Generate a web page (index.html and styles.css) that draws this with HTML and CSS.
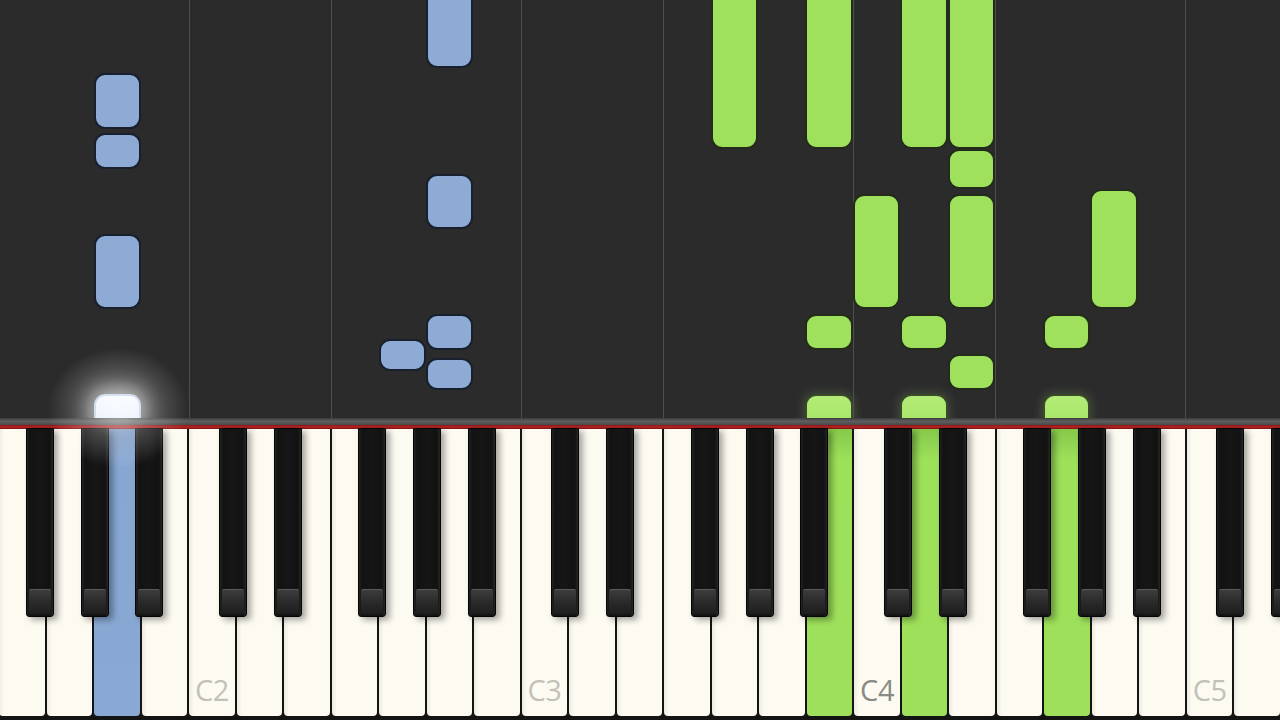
FILE: index.html
```html
<!DOCTYPE html>
<html>
<head>
<meta charset="utf-8">
<link rel="stylesheet" href="styles.css">
</head>
<body>
<div class="stage">
  <div class="lane"></div>
  <div class="lane"></div>
  <div class="lane">
    <div class="note blue" style="top:73px;height:56px"></div>
    <div class="note blue" style="top:133px;height:36px"></div>
    <div class="note blue" style="top:234px;height:75px"></div>
    <div class="note blue playing" style="top:394px;height:40px"></div>
  </div>
  <div class="lane"></div>
  <div class="lane grid"></div>
  <div class="lane"></div>
  <div class="lane"></div>
  <div class="lane grid"></div>
  <div class="lane">
    <div class="note blue" style="top:339px;height:32px"></div>
  </div>
  <div class="lane">
    <div class="note blue" style="top:-14px;height:82px"></div>
    <div class="note blue" style="top:174px;height:55px"></div>
    <div class="note blue" style="top:314px;height:36px"></div>
    <div class="note blue" style="top:358px;height:32px"></div>
  </div>
  <div class="lane"></div>
  <div class="lane grid"></div>
  <div class="lane"></div>
  <div class="lane"></div>
  <div class="lane grid"></div>
  <div class="lane">
    <div class="note green" style="top:-14px;height:163px"></div>
  </div>
  <div class="lane"></div>
  <div class="lane">
    <div class="note green" style="top:-14px;height:163px"></div>
    <div class="note green" style="top:314px;height:36px"></div>
    <div class="note green playing" style="top:394px;height:40px"></div>
  </div>
  <div class="lane grid">
    <div class="note green" style="top:194px;height:115px"></div>
  </div>
  <div class="lane">
    <div class="note green" style="top:-14px;height:163px"></div>
    <div class="note green" style="top:314px;height:36px"></div>
    <div class="note green playing" style="top:394px;height:40px"></div>
  </div>
  <div class="lane">
    <div class="note green" style="top:-14px;height:163px"></div>
    <div class="note green" style="top:149px;height:40px"></div>
    <div class="note green" style="top:194px;height:115px"></div>
    <div class="note green" style="top:354px;height:36px"></div>
  </div>
  <div class="lane grid"></div>
  <div class="lane">
    <div class="note green" style="top:314px;height:36px"></div>
    <div class="note green playing" style="top:394px;height:40px"></div>
  </div>
  <div class="lane">
    <div class="note green" style="top:189px;height:120px"></div>
  </div>
  <div class="lane"></div>
  <div class="lane grid"></div>
  <div class="lane"></div>
</div>
<div class="bar"></div>
<div class="redline"></div>
<div class="keyboard">
  <div class="wk"><div class="bk bk-fs"></div></div>
  <div class="wk"><div class="bk bk-gs"></div></div>
  <div class="wk pressed-blue"><div class="bk bk-as"></div></div>
  <div class="wk"></div>
  <div class="wk"><div class="bk bk-cs"></div><span class="label">C2</span></div>
  <div class="wk"><div class="bk bk-ds"></div></div>
  <div class="wk"></div>
  <div class="wk"><div class="bk bk-fs"></div></div>
  <div class="wk"><div class="bk bk-gs"></div></div>
  <div class="wk"><div class="bk bk-as"></div></div>
  <div class="wk"></div>
  <div class="wk"><div class="bk bk-cs"></div><span class="label">C3</span></div>
  <div class="wk"><div class="bk bk-ds"></div></div>
  <div class="wk"></div>
  <div class="wk"><div class="bk bk-fs"></div></div>
  <div class="wk"><div class="bk bk-gs"></div></div>
  <div class="wk"><div class="bk bk-as"></div></div>
  <div class="wk pressed-green"></div>
  <div class="wk"><div class="bk bk-cs"></div><span class="label dark">C4</span></div>
  <div class="wk pressed-green"><div class="bk bk-ds"></div></div>
  <div class="wk"></div>
  <div class="wk"><div class="bk bk-fs"></div></div>
  <div class="wk pressed-green"><div class="bk bk-gs"></div></div>
  <div class="wk"><div class="bk bk-as"></div></div>
  <div class="wk"></div>
  <div class="wk"><div class="bk bk-cs"></div><span class="label">C5</span></div>
  <div class="wk"><div class="bk bk-ds"></div></div>
</div>
<div class="glow"></div>
</body>
</html>
```

FILE: styles.css
```css
html, body {
  margin: 0;
  padding: 0;
  width: 1280px;
  height: 720px;
  overflow: hidden;
  background: #111;
  font-family: "Open Sans", "Liberation Sans", sans-serif;
  position: relative;
}

.stage {
  margin-left: -1px;
  width: 1281px;
  height: 418px;
  display: flex;
  background: #2b2b2c;
  overflow: hidden;
}

.lane {
  flex: 1;
  position: relative;
}

.lane.grid::before {
  content: "";
  position: absolute;
  left: 0;
  top: 0;
  bottom: 0;
  width: 1px;
  background: #4e4e4f;
}

.note {
  position: absolute;
  left: 0;
  right: 0;
  border-radius: 11px;
  box-sizing: border-box;
}

.note.blue {
  background: #8dabd5;
  border: 2px solid #18202e;
}

.note.green {
  background: #9fe05c;
  border: 2px solid #232c1b;
}

.note.blue.playing {
  background: linear-gradient(#f4f8ff, #dbe9fb);
  border-color: #b9cce6;
  box-shadow: 0 0 18px 8px rgba(255, 255, 255, 0.35);
}

.note.green.playing {
  background: linear-gradient(#b4ec78, #a2e260);
  border-color: #3a4a28;
  box-shadow: 0 0 10px 2px rgba(200, 255, 150, 0.15);
}

.bar {
  height: 7px;
  background: linear-gradient(#3b3b3b, #5f5f5f 45%, #4a4a4a);
}

.redline {
  height: 4px;
  background: linear-gradient(#8a1818, #b82626 50%, #7a1212);
}

.keyboard {
  margin-left: -1px;
  width: 1281px;
  height: 291px;
  display: flex;
  gap: 2px;
  background: #141414;
  position: relative;
}

.wk {
  flex: 1;
  height: 287px;
  position: relative;
  background: linear-gradient(to right, #ecebe1 0, #fdfbf1 5px, #fdfbf1 100%);
  border-radius: 0 0 4px 4px;
  display: flex;
  flex-direction: column;
  justify-content: flex-end;
  align-items: center;
}

.wk.pressed-blue {
  background: linear-gradient(#6f8fbb 0, #87a7d2 30px, #89a9d4 100%);
}

.wk.pressed-green {
  background: linear-gradient(#86c84a 0, #9de05a 30px, #9ee05b 100%);
}

.label {
  font-size: 29px;
  font-weight: 400;
  line-height: 1;
  color: #c2c1b9;
  padding-bottom: 12px;
  letter-spacing: -0.5px;
}

.label.dark {
  color: #8a8a84;
}

.bk {
  position: absolute;
  top: -1px;
  width: 28px;
  height: 189px;
  z-index: 3;
  box-sizing: border-box;
  border: 1px solid #050505;
  border-radius: 0 0 3px 3px;
  background: linear-gradient(to right, #222 0, #121212 3px, #161616 50%, #121212 calc(100% - 3px), #262626 100%);
  box-shadow: 4px 3px 6px rgba(0, 0, 0, 0.35);
}

.bk::after {
  content: "";
  position: absolute;
  left: 2px;
  right: 2px;
  bottom: 2px;
  height: 24px;
  border-top: 1px solid #5a5a5a;
  border-radius: 2px 2px 1px 1px;
  background: linear-gradient(#3c3c3c, #2a2a2a 50%, #1e1e1e);
}

.bk-cs { left: 29.5px; }
.bk-ds { left: 37px; }
.bk-fs { left: 26.5px; }
.bk-gs { left: 34px; }
.bk-as { left: 41px; }

.glow {
  position: absolute;
  left: 48px;
  top: 348px;
  width: 140px;
  height: 120px;
  border-radius: 50%;
  background: radial-gradient(closest-side, rgba(255, 255, 255, 0.6), rgba(255, 255, 255, 0.22) 50%, rgba(255, 255, 255, 0) 100%);
  pointer-events: none;
  z-index: 5;
}
```
